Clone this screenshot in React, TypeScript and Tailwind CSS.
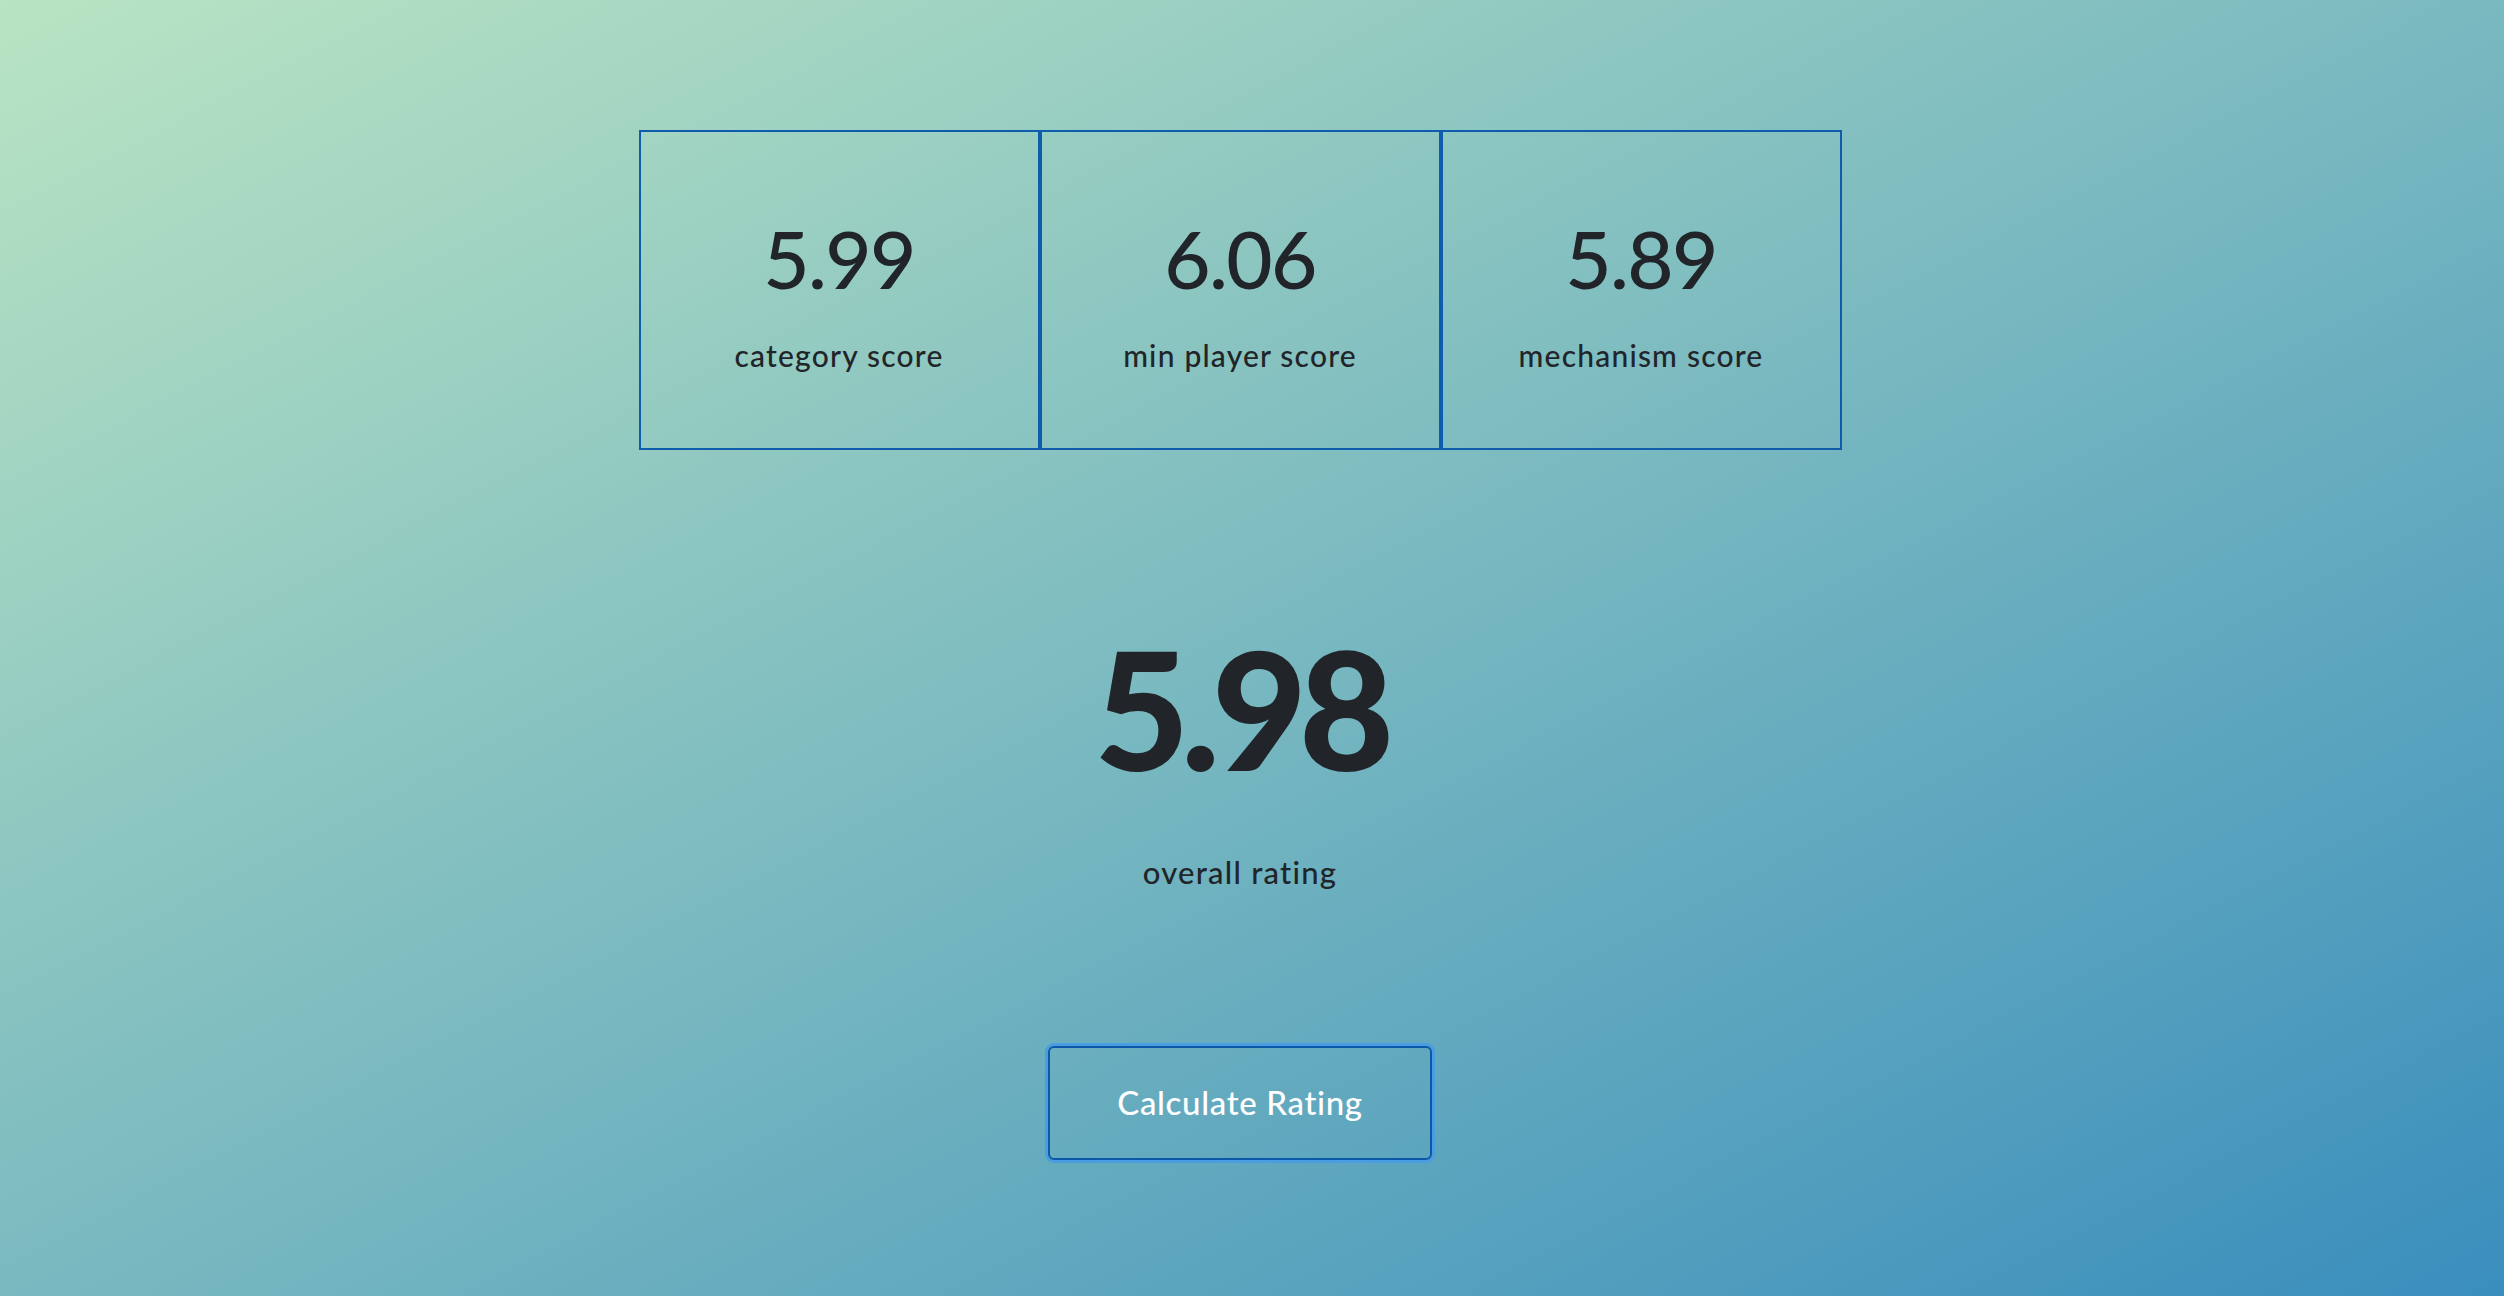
import React from "react";

const scores = [
  { value: "5.99", label: "category score" },
  { value: "6.06", label: "min player score" },
  { value: "5.89", label: "mechanism score" },
];

export default function App() {
  return (
    <div
      className="w-full h-[1296px] overflow-hidden bg-[linear-gradient(to_bottom_right,#b9e4c3,#3a8ebd)] text-[#212529]"
      style={{ fontFamily: "Lato, 'Noto Sans', sans-serif" }}
    >
      <div className="w-[2480px] flex flex-col items-center pt-[130px]">
        <div className="flex">
          {scores.map((s) => (
            <div
              key={s.label}
              className="w-[401px] h-[320px] border-2 border-[#0f5cad] flex flex-col items-center justify-center gap-[42px] pt-[8px]"
            >
              <div className="text-[80px] leading-none font-medium tracking-[-0.02em]">{s.value}</div>
              <div className="text-[30px] leading-none font-medium tracking-[0.04em]">{s.label}</div>
            </div>
          ))}
        </div>
        <div className="mt-[176px] text-[164px] leading-none font-black tracking-[-0.05em]">5.98</div>
        <div className="mt-[67px] text-[31px] leading-none font-medium tracking-[0.04em]">overall rating</div>
        <button className="mt-[158px] w-[384px] h-[114px] rounded-[6px] border-2 border-[#0d57a8] ring-[3px] ring-[#4a9de0] text-white text-[33px] font-medium tracking-[0.02em] bg-transparent">
          Calculate Rating
        </button>
      </div>
    </div>
  );
}
